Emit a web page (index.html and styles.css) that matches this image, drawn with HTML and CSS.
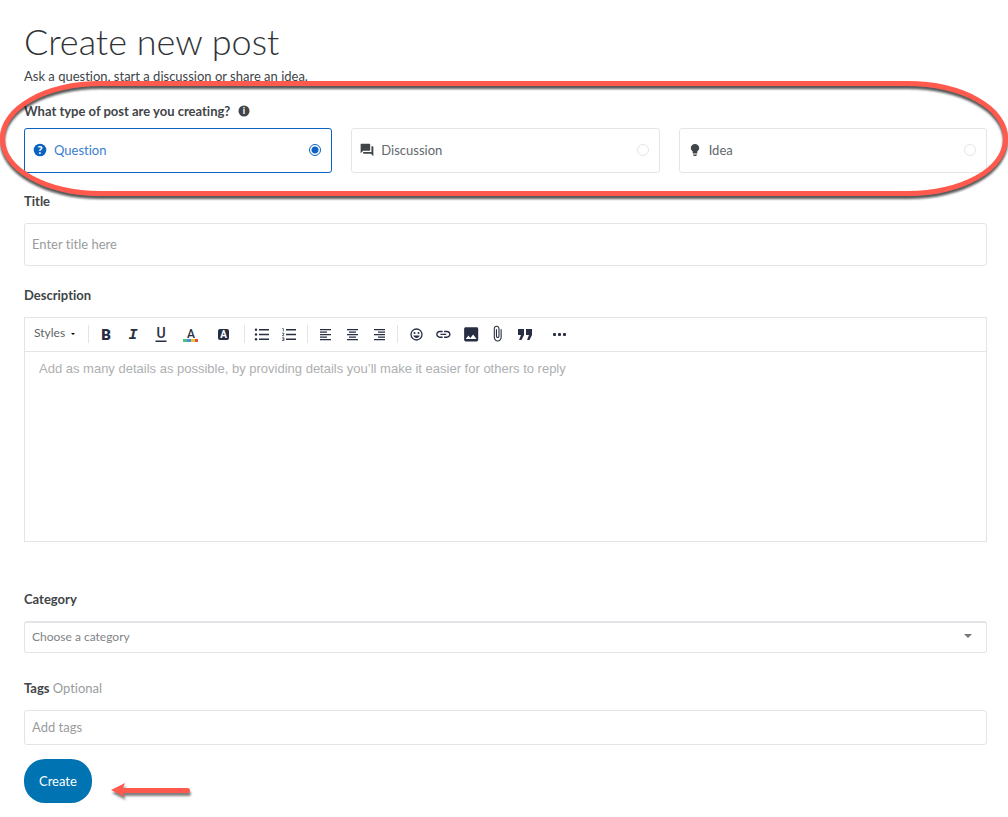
FILE: index.html
```html
<!DOCTYPE html>
<html lang="en">
<head>
	<meta charset="utf-8">
	<meta name="viewport" content="width=device-width, initial-scale=1">
	<title>Create new post</title>
	<link rel="stylesheet" href="styles.css">
</head>
<body>
<form class="post-form">
	<h1>Create new post</h1>
	<p class="intro">Ask a question, start a discussion or share an idea.</p>

	<fieldset class="types">
		<legend>What type of post are you creating?
			<svg class="info" viewBox="0 0 12 12"><circle cx="6" cy="6" r="5.5"/><text x="6" y="9">i</text></svg>
		</legend>
		<div class="type-list">
			<label class="type">
				<svg class="type-icon" viewBox="0 0 14 14"><circle cx="7" cy="7" r="6.3"/><text x="7" y="11">?</text></svg>
				<span>Question</span>
				<input type="radio" name="type" value="question" checked>
			</label>
			<label class="type">
				<svg class="type-icon" viewBox="1 1 22 22"><path d="M21 6h-2v9H6v2c0 .55.45 1 1 1h11l4 4V7c0-.55-.45-1-1-1zm-4 6V3c0-.55-.45-1-1-1H3c-.55 0-1 .45-1 1v14l4-4h10c.55 0 1-.45 1-1z"/></svg>
				<span>Discussion</span>
				<input type="radio" name="type" value="discussion">
			</label>
			<label class="type">
				<svg class="type-icon" viewBox="0 0 14 14"><path d="M7 1C4.600 1 2.800 2.800 2.800 5c0 1.500.9 2.700 1.900 3.600V10.500h4.600V8.600C10.300 7.700 11.200 6.500 11.200 5 11.200 2.800 9.400 1 7 1zM5 11.500h4v.6L8 13H6l-1-.9z"/></svg>
				<span>Idea</span>
				<input type="radio" name="type" value="idea">
			</label>
		</div>
		<div class="highlight"></div>
	</fieldset>

	<div class="field title">
		<label for="title">Title</label>
		<input class="box" type="text" id="title" placeholder="Enter title here">
	</div>

	<div class="field">
		<label for="description">Description</label>
		<div class="editor">
			<div class="toolbar">
				<div class="styles">
					<select aria-label="Styles"><option>Styles</option></select>
					<svg viewBox="0 0 4 2"><path d="M0 0h4L2 2z"/></svg>
				</div>
				<div class="group">
					<button type="button" aria-label="Bold"><svg viewBox="0 0 18 18"><text class="bold" x="8" y="15">B</text></svg></button>
					<button type="button" aria-label="Italic"><svg viewBox="0 0 18 18"><text class="italic" x="8" y="14">I</text></svg></button>
					<button type="button" aria-label="Underline"><svg viewBox="0 0 18 18"><text class="under" x="9" y="13">U</text><path d="M3.500 15.500h11V17h-11z"/></svg></button>
					<button class="wide" type="button" aria-label="Text color"><svg viewBox="0 0 18 18"><text class="color" x="9" y="13">A</text><path fill="#4fc27c" d="M1 14h4v3H1z"/><path fill="#4a90e2" d="M5 14h4v3H5z"/><path fill="#f0c23c" d="M9 14h4v3H9z"/><path fill="#e0503c" d="M13 14h3v3h-3z"/></svg></button>
					<button class="wide" type="button" aria-label="Background color"><svg viewBox="0 0 18 18"><rect x="3" y="4" width="11" height="11" rx="2"/><text class="inverse" x="8.500" y="13">A</text></svg></button>
				</div>
				<div class="group">
					<button type="button" aria-label="Bulleted list"><svg viewBox="0 0 18 18"><path d="M5 4h10v1.500H5zM5 8.800h10v1.500H5zM5 13.500h10V15H5z"/><circle cx="2" cy="4.700" r="1.200"/><circle cx="2" cy="9.500" r="1.200"/><circle cx="2" cy="14.200" r="1.200"/></svg></button>
					<button type="button" aria-label="Numbered list"><svg viewBox="0 0 18 18"><path d="M5 4h10v1.500H5zM5 8.800h10v1.500H5zM5 13.500h10V15H5z"/><path class="line" d="M1.300 3.500h1v3M1 8.200h2v.8l-1.700 1.700H3.200M1 12.800h2v2.700H1M1.600 14.200H3"/></svg></button>
				</div>
				<div class="group">
					<button type="button" aria-label="Align left"><svg viewBox="0 0 18 18"><path d="M3 4h11v1.200H3zM3 6.500h7v1.200H3zM3 9h11v1.200H3zM3 11.500h7v1.200H3zM3 14h11v1.200H3z"/></svg></button>
					<button type="button" aria-label="Align center"><svg viewBox="0 0 18 18"><path d="M3 4h11v1.200H3zM5 6.500h7v1.200H5zM3 9h11v1.200H3zM5 11.500h7v1.200H5zM3 14h11v1.200H3z"/></svg></button>
					<button type="button" aria-label="Align right"><svg viewBox="0 0 18 18"><path d="M3 4h11v1.200H3zM7 6.500h7v1.200H7zM3 9h11v1.200H3zM7 11.500h7v1.200H7zM3 14h11v1.200H3z"/></svg></button>
				</div>
				<div class="group">
					<button type="button" aria-label="Emoji"><svg viewBox="0 0 18 18"><circle class="line" cx="9.500" cy="9.500" r="5.500"/><circle cx="7.500" cy="8" r="1"/><circle cx="11.500" cy="8" r="1"/><path d="M6.300 10.500h6.400c-.6 1.500-1.700 2.400-3.200 2.400s-2.600-.9-3.200-2.400z"/></svg></button>
					<button type="button" aria-label="Link"><svg viewBox="-1 -1 25 25"><path d="M3.900 12c0-1.710 1.390-3.100 3.100-3.100h4V7H7c-2.760 0-5 2.240-5 5s2.240 5 5 5h4v-1.900H7c-1.710 0-3.100-1.390-3.100-3.100zM8 13h8v-2H8v2zm9-6h-4v1.900h4c1.710 0 3.100 1.390 3.100 3.100s-1.390 3.100-3.100 3.100h-4V17h4c2.760 0 5-2.240 5-5s-2.240-5-5-5z"/></svg></button>
					<button type="button" aria-label="Image"><svg viewBox="-1 0 23 23"><path d="M21 19V5c0-1.100-.9-2-2-2H5c-1.100 0-2 .9-2 2v14c0 1.100.9 2 2 2h14c1.100 0 2-.9 2-2zM8.500 13.500l2.500 3.010L14.500 12l4.500 6H5l3.500-4.500z"/></svg></button>
					<button type="button" aria-label="Attachment"><svg viewBox="-1 0 25 25"><path d="M16.500 6v11.500c0 2.210-1.790 4-4 4s-4-1.790-4-4V5c0-1.380 1.120-2.500 2.500-2.500s2.500 1.120 2.500 2.500v10.500c0 .55-.45 1-1 1s-1-.45-1-1V6H10v9.500c0 1.380 1.120 2.500 2.500 2.500s2.500-1.120 2.500-2.500V5c0-2.210-1.790-4-4-4S7 2.790 7 5v12.500c0 3.040 2.460 5.500 5.500 5.500s5.500-2.460 5.500-5.500V6h-1.500z"/></svg></button>
					<button type="button" aria-label="Quote"><svg viewBox="0 0 18 18"><path d="M3 4h6v6l-2.500 5H4l2-5H3zM11 4h6v6l-2.500 5H12l2-5h-3z"/></svg></button>
					<button class="more" type="button" aria-label="More"><svg viewBox="0 0 18 18"><rect x="3" y="8" width="3" height="3" rx="1"/><rect x="8" y="8" width="3" height="3" rx="1"/><rect x="13" y="8" width="3" height="3" rx="1"/></svg></button>
				</div>
			</div>
			<textarea id="description" placeholder="Add as many details as possible, by providing details you’ll make it easier for others to reply"></textarea>
		</div>
	</div>

	<div class="field category">
		<label for="category">Category</label>
		<div class="dropdown">
			<select class="box" id="category"><option>Choose a category</option></select>
			<svg viewBox="0 0 8 4"><path d="M0 0h8L4 4z"/></svg>
		</div>
	</div>

	<div class="field tags">
		<label for="tags">Tags <span>Optional</span></label>
		<input class="box" type="text" id="tags" placeholder="Add tags">
	</div>

	<div class="actions">
		<button class="create" type="submit">Create</button>
		<svg class="arrow" viewBox="0 0 80 18"><path d="M0 8L14 1l-2 5h65q2 0 2 2.500T77 11H12l2 4z"/></svg>
	</div>
</form>
</body>
</html>
```
FILE: styles.css
```css
* {
	box-sizing: border-box;
}
body {
	margin: 0;
	background: #fff;
	color: #414548;
	font-family: Lato, "Open Sans", sans-serif;
	font-size: 13px;
	font-variant-ligatures: none;
	line-height: 20px;
}
input, select, textarea, button {
	font: inherit;
	color: inherit;
}
.post-form {
	padding: 19px 21px 14px 24px;
}
h1 {
	margin: 0 0 3px;
	font-size: 36px;
	font-weight: 300;
	line-height: 44px;
	color: #2f3336;
}
.intro {
	margin: 0;
}

/* post type */
.types {
	position: relative;
	margin: 15px 0 0;
	padding: 0;
	border: 0;
}
legend {
	display: flex;
	align-items: center;
	gap: 8px;
	margin-bottom: 7px;
	padding: 0;
	font-weight: bold;
}
.info {
	width: 12px;
	height: 12px;
	fill: #414548;
}
.info text, .type-icon text {
	fill: #fff;
	font-size: 9px;
	font-weight: 900;
	text-anchor: middle;
}
.type-icon text {
	font-size: 11px;
}
.type-list {
	display: grid;
	grid-template-columns: repeat(3, 1fr);
	gap: 19px;
}
.type {
	display: flex;
	align-items: center;
	gap: 7px;
	height: 45px;
	padding: 0 10px 2px 8px;
	border: 1px solid #e4e5e6;
	border-radius: 3px;
	color: #64686b;
}
.type-icon {
	width: 14px;
	height: 14px;
	fill: #414548;
}
.type input {
	appearance: none;
	width: 12px;
	height: 12px;
	margin: 0 0 0 auto;
	border: 1px solid #e4e5e6;
	border-radius: 50%;
}
.type:has(input:checked) {
	border-color: #0b62c1;
	color: #3a7ecd;
}
.type:has(input:checked) .type-icon {
	fill: #0b62c1;
}
.type input:checked {
	border-color: #0b62c1;
	background: radial-gradient(circle, #0b62c1 3px, #fff 4px);
}
.highlight {
	position: absolute;
	top: -47px;
	right: -21px;
	bottom: -23px;
	left: -24px;
	border: 5px solid #ff5a4d;
	border-radius: 100px / 57px;
	filter: drop-shadow(0 3px 1px rgba(0, 0, 0, .65));
	pointer-events: none;
}

/* fields */
.field {
	margin-top: 19px;
}
.title {
	margin-top: 18px;
}
.field > label {
	display: block;
	margin-bottom: 12px;
	font-weight: bold;
}
.field label span {
	font-weight: normal;
	color: #999c9e;
}
.box {
	display: block;
	width: 100%;
	height: 35px;
	padding: 0 7px 2px;
	border: 1px solid #e2e4e7;
	border-radius: 3px;
	background: #fff;
}
.title .box {
	height: 43px;
}
::placeholder {
	color: #999c9e;
	opacity: 1;
}
.category {
	margin-top: 47px;
}
.tags {
	margin-top: 25px;
}
select {
	appearance: none;
}
.dropdown, .styles {
	display: grid;
	align-items: center;
}
.dropdown > *, .styles > * {
	grid-area: 1 / 1;
}
.dropdown .box {
	height: 32px;
	border-top-width: 2px;
	color: #808386;
	font-size: 12px;
}
.dropdown svg {
	justify-self: end;
	width: 8px;
	height: 4px;
	margin-right: 15px;
	margin-bottom: 2px;
	fill: #777;
	pointer-events: none;
}

/* editor */
.editor {
	border: 1px solid #e2e4e7;
}
.toolbar {
	display: flex;
	align-items: center;
	height: 34px;
	padding: 0 0 2px 9px;
	border-bottom: 1px solid #e2e4e7;
}
.styles {
	width: 50px;
	font-size: 12px;
	color: #5f6366;
}
.styles select {
	padding: 0 0 2px;
	border: 0;
	background: none;
}
.styles svg {
	justify-self: end;
	width: 4px;
	height: 2px;
	margin-right: 9px;
	pointer-events: none;
}
.group {
	display: flex;
	margin-left: 4px;
	padding-left: 4px;
	border-left: 1px solid #e2e4e7;
}
.group button {
	display: flex;
	align-items: center;
	justify-content: center;
	width: 27px;
	height: 18px;
	padding: 0;
	border: 0;
	background: none;
}
.group .wide {
	width: 33px;
}
.group .more {
	width: 43px;
}
.group svg {
	width: 18px;
	height: 18px;
	fill: #272e43;
	overflow: visible;
}
.group text {
	font-family: Roboto, sans-serif;
	text-anchor: middle;
}
.group .bold {
	font-size: 15px;
	font-weight: 900;
}
.group .italic {
	font-family: "Liberation Mono", monospace;
	font-size: 15px;
	font-style: italic;
	font-weight: bold;
}
.group .under {
	font-size: 14px;
	font-weight: 500;
}
.group .color {
	font-size: 12px;
	font-weight: 500;
}
.group .inverse {
	fill: #fff;
	font-size: 10px;
	font-weight: bold;
}
.line {
	fill: none;
	stroke: #272e43;
	stroke-width: 1.3;
}
path.line {
	stroke-width: .7;
}
.editor textarea {
	display: block;
	width: 100%;
	height: 189px;
	padding: 7px 14px;
	border: 0;
	font-family: "Liberation Sans", Arial, sans-serif;
	resize: none;
}
.editor textarea::placeholder {
	color: #adafb1;
}

/* submit */
.actions {
	display: flex;
	align-items: center;
	gap: 19px;
	margin-top: 14px;
}
.create {
	height: 44px;
	padding: 0 15px;
	border: 0;
	border-radius: 21px;
	background: #0073b3;
	color: #fff;
}
.arrow {
	width: 80px;
	height: 18px;
	margin-top: 20px;
	fill: #ff5a4d;
	overflow: visible;
	filter: drop-shadow(1px 3px 1px rgba(0, 0, 0, .5));
}
```
